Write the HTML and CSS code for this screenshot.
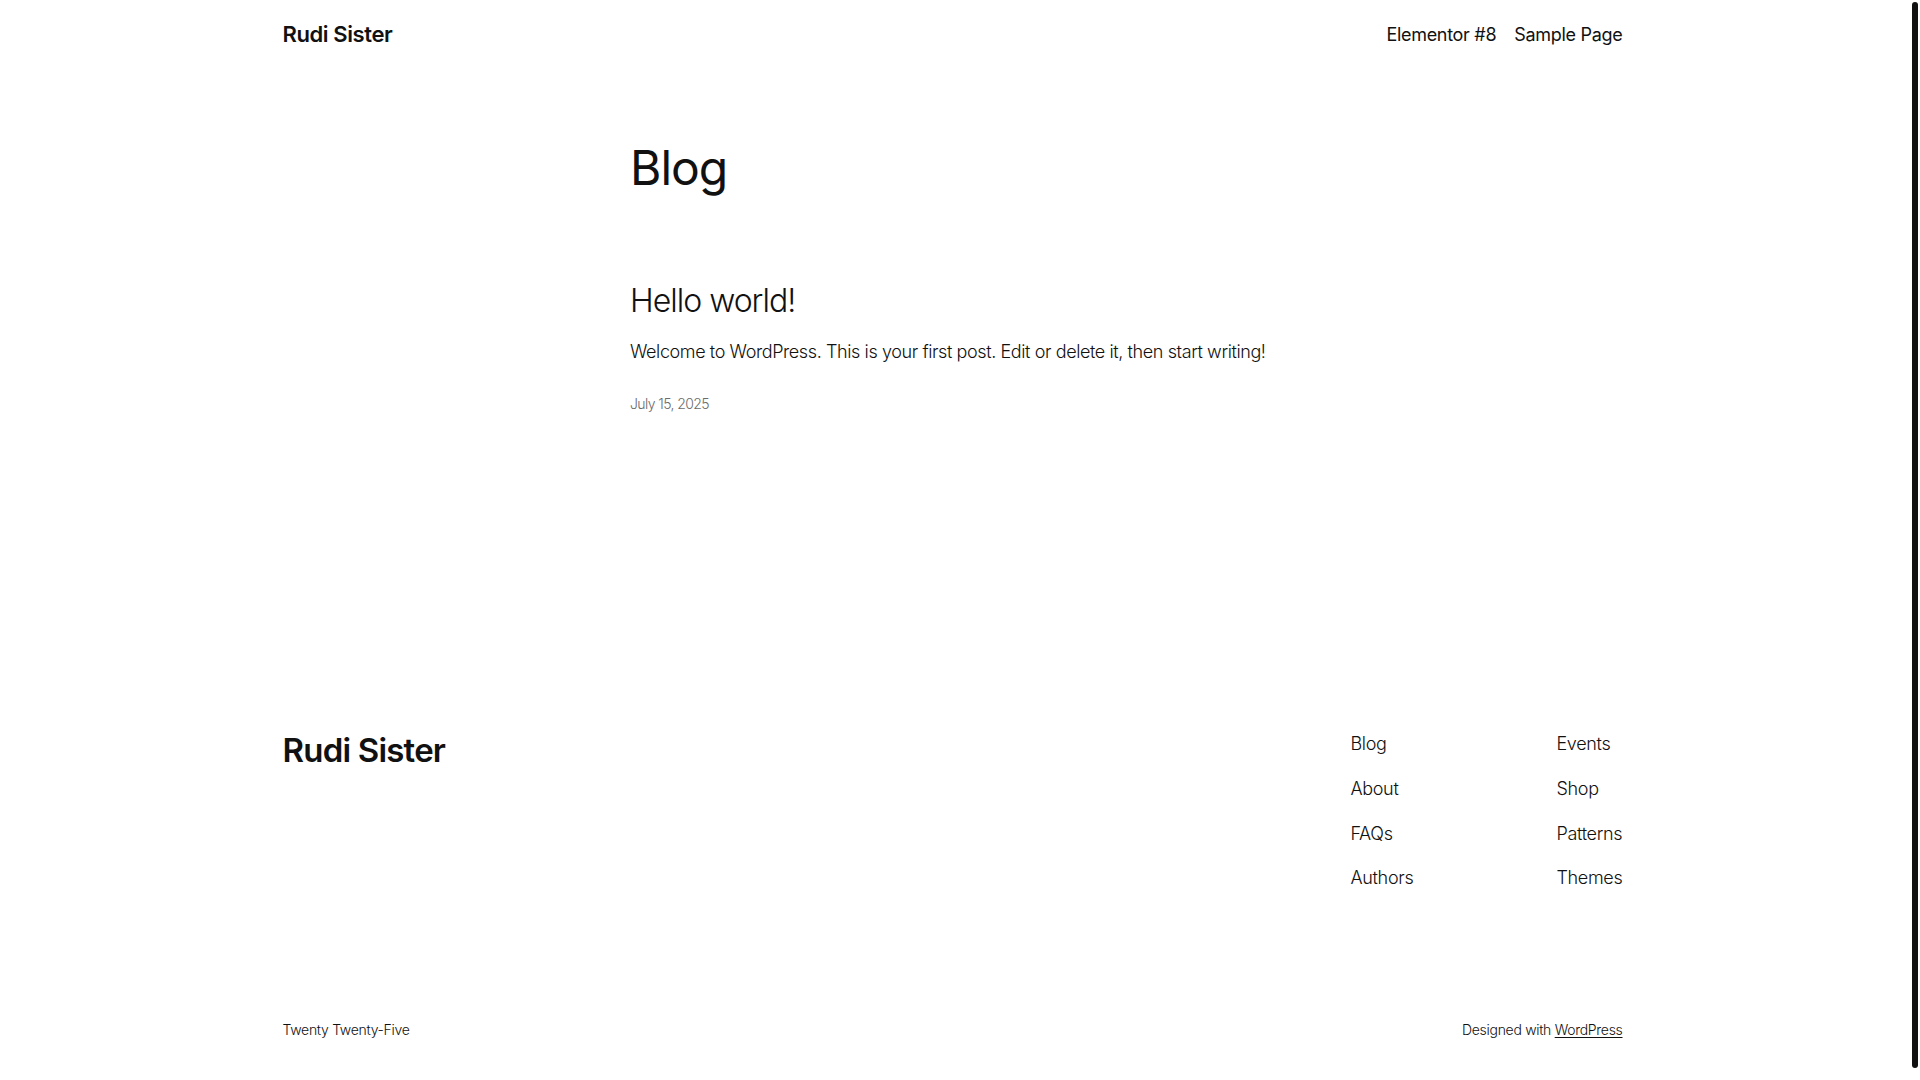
FILE: index.html
```html
<!DOCTYPE html>
<html lang="en">
<head>
<meta charset="utf-8">
<title>Blog – Rudi Sister</title>
<link rel="stylesheet" href="styles.css">
</head>
<body>
<div class="page">
  <header class="site-header">
    <a class="site-title" href="#">Rudi Sister</a>
    <nav class="main-nav">
      <a href="#">Elementor #8</a>
      <a href="#">Sample Page</a>
    </nav>
  </header>

  <main class="content">
    <h1 class="page-title">Blog</h1>
    <article class="post">
      <h2 class="post-title"><a href="#">Hello world!</a></h2>
      <p class="post-excerpt">Welcome to WordPress. This is your first post. Edit or delete it, then start writing!</p>
      <time class="post-date">July 15, 2025</time>
    </article>
  </main>

  <footer class="site-footer">
    <div class="footer-top">
      <a class="footer-title" href="#">Rudi Sister</a>
      <nav class="footer-nav">
        <ul class="footer-col first">
          <li><a href="#">Blog</a></li>
          <li><a href="#">About</a></li>
          <li><a href="#">FAQs</a></li>
          <li><a href="#">Authors</a></li>
        </ul>
        <ul class="footer-col">
          <li><a href="#">Events</a></li>
          <li><a href="#">Shop</a></li>
          <li><a href="#">Patterns</a></li>
          <li><a href="#">Themes</a></li>
        </ul>
      </nav>
    </div>
    <div class="footer-bottom">
      <span>Twenty Twenty-Five</span>
      <span>Designed with <a class="wp-link" href="#">WordPress</a></span>
    </div>
  </footer>
</div>
<div class="scrollbar" aria-hidden="true"><div class="scrollbar-thumb"></div></div>
</body>
</html>
```

FILE: styles.css
```css
html, body {
  margin: 0;
  padding: 0;
  background: #ffffff;
}

body {
  display: flex;
  align-items: flex-start;
  font-family: Inter, "Noto Sans", "Liberation Sans", sans-serif;
  color: #111111;
  letter-spacing: -0.3px;
}

.page {
  flex: 1;
  min-width: 0;
}

.scrollbar {
  flex: none;
  width: 15px;
  padding-top: 2px;
  display: flex;
  justify-content: flex-end;
}

.scrollbar-thumb {
  width: 6px;
  height: 1066px;
  margin-right: 2px;
  border-radius: 3px;
  background: #111111;
}

a {
  color: inherit;
  text-decoration: none;
}

.site-header {
  max-width: 1340px;
  margin: 0 auto;
  height: 68px;
  display: flex;
  align-items: center;
  justify-content: space-between;
}

.site-title {
  font-size: 22px;
  font-weight: 600;
  letter-spacing: -0.4px;
}

.main-nav {
  display: flex;
  gap: 18px;
  font-size: 18px;
  font-weight: 400;
}

.content {
  width: 645px;
  margin: 0 auto;
  padding-top: 71px;
}

.page-title {
  margin: 0;
  font-size: 48px;
  font-weight: 400;
  line-height: 1.2;
  letter-spacing: -1px;
}

.post {
  margin-top: 85px;
}

.post-title {
  margin: 0;
  font-size: 32px;
  font-weight: 300;
  line-height: 1.2;
  letter-spacing: -1px;
}

.post-excerpt {
  margin: 18px 0 0;
  font-size: 18px;
  line-height: 1.6;
  font-weight: 300;
  letter-spacing: -0.4px;
  white-space: nowrap;
}

.post-date {
  display: block;
  margin-top: 27px;
  font-size: 14px;
  line-height: 1.4;
  color: #6b6b6b;
  font-weight: 300;
  letter-spacing: -0.6px;
}

.site-footer {
  max-width: 1340px;
  margin: 318px auto 0;
  padding-bottom: 58px;
}

.footer-top {
  display: flex;
  justify-content: space-between;
  align-items: flex-start;
}

.footer-title {
  font-size: 33px;
  font-weight: 600;
  line-height: 1.2;
  letter-spacing: -0.8px;
}

.footer-nav {
  display: flex;
}

.footer-col {
  list-style: none;
  margin: 0;
  padding: 0;
  display: flex;
  flex-direction: column;
  gap: 19.5px;
  font-size: 18px;
  line-height: 1.4;
  font-weight: 300;
}

.footer-col.first {
  width: 206px;
}

.footer-bottom {
  margin-top: 129px;
  display: flex;
  justify-content: space-between;
  font-size: 14px;
  line-height: 1.4;
  font-weight: 300;
}

.wp-link {
  text-decoration: underline;
  text-underline-offset: 2px;
}
```
